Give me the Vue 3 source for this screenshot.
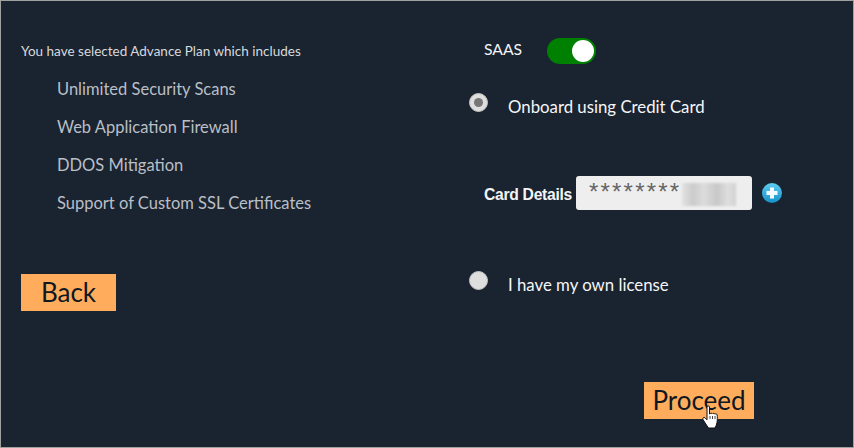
<script setup>
const features = [
  'Unlimited Security Scans',
  'Web Application Firewall',
  'DDOS Mitigation',
  'Support of Custom SSL Certificates'
]
</script>

<template>
  <div class="page">
    <section class="left">
      <p class="intro">You have selected Advance Plan which includes</p>
      <ul class="features">
        <li v-for="f in features" :key="f">{{ f }}</li>
      </ul>
      <button class="btn back">Back</button>
    </section>
    <section class="right">
      <div class="saas">
        <span class="saas-label">SAAS</span>
        <span class="toggle"><span class="knob"></span></span>
      </div>
      <div class="option first">
        <span class="radio checked"></span>
        <span class="opt-label">Onboard using Credit Card</span>
      </div>
      <div class="card">
        <span class="card-label">Card Details</span>
        <div class="input">
          <span class="stars">********</span>
          <span class="smudge"></span>
        </div>
        <svg class="plus" width="20" height="20" viewBox="0 0 20 20">
          <defs>
            <linearGradient id="pg" x1="0" y1="0" x2="0" y2="1">
              <stop offset="0" stop-color="#5fcdf0" />
              <stop offset="1" stop-color="#1590c8" />
            </linearGradient>
          </defs>
          <circle cx="10" cy="10" r="10" fill="url(#pg)" />
          <path d="M8 4.500h4V8h3.500v4H12v3.500H8V12H4.500V8H8z" fill="#f2fbff" />
        </svg>
      </div>
      <div class="option second">
        <span class="radio"></span>
        <span class="opt-label">I have my own license</span>
      </div>
      <div class="actions">
        <button class="btn proceed">Proceed</button>
      </div>
    </section>
    <svg class="cursor" width="18" height="25" viewBox="0 0 18 25">
      <path d="M5 2c0-1.400 2.500-1.400 2.500 0v7h.5c.3-1 2.200-1 2.500 0 .4-.9 2.100-.8 2.400.2.500-.8 2.100-.5 2.300.8.200 2 .2 5-.2 7.500-.3 2-1 3.500-2 5.500H6.500C5 20.500 2.500 17.500 1 14.500c-.7-1.500.8-2.700 2-1.700l2 2z" fill="#fff" stroke="#111" stroke-width="1" stroke-linejoin="round" />
      <path d="M8 11v3M10.500 11v3M13 11v3" stroke="#111" stroke-width=".8" fill="none" />
    </svg>
  </div>
</template>

<style>
html, body { margin: 0; background: #1a2330; }
</style>

<style scoped>
.page {
  position: relative;
  box-sizing: border-box;
  width: 854px;
  height: 448px;
  display: flex;
  background: #1a2330;
  border: 1px solid #a0a0a0;
  font-family: Lato, "Open Sans", sans-serif;
  overflow: hidden;
}
.left {
  width: 468px;
  flex: none;
  padding: 43px 0 0 20px;
  box-sizing: border-box;
}
.intro {
  margin: 0;
  font-size: 13.500px;
  line-height: 15px;
  color: #d6dade;
  white-space: nowrap;
}
.features {
  list-style: none;
  margin: 11px 0 0;
  padding: 0 0 0 36px;
}
.features li {
  height: 38px;
  line-height: 38px;
  font-size: 16.500px;
  color: #b9bfc6;
  white-space: nowrap;
}
.btn {
  display: block;
  border: 0;
  padding: 0 0 1px;
  box-sizing: border-box;
  height: 37px;
  background: #ffad5c;
  color: #0e1822;
  font-family: inherit;
  font-size: 26px;
  font-weight: 400;
}
.back { width: 95px; margin-top: 52px; }
.right { flex: 1; min-width: 0; }
.saas {
  display: flex;
  align-items: center;
  height: 26px;
  margin: 37px 0 0 15px;
}
.saas-label {
  width: 63px;
  margin-top: -4px;
  font-size: 15.700px;
  color: #f2f4f6;
}
.toggle {
  width: 49px;
  height: 26px;
  border-radius: 13px;
  background: #008000;
  display: flex;
  align-items: center;
  justify-content: flex-end;
  padding-right: 2px;
  box-sizing: border-box;
}
.knob {
  width: 22px;
  height: 22px;
  border-radius: 50%;
  background: #fff;
}
.option { display: flex; }
.first { margin-top: 29px; }
.second { margin-top: 61px; }
.radio {
  width: 19px;
  height: 19px;
  border-radius: 50%;
  background: #dedede;
  border: 1px solid #c4c4c4;
  box-sizing: border-box;
  display: flex;
  align-items: center;
  justify-content: center;
  flex: none;
}
.radio.checked::after {
  content: "";
  width: 9px;
  height: 9px;
  border-radius: 50%;
  background: #777;
}
.opt-label {
  margin: 5px 0 0 20px;
  font-size: 16.800px;
  line-height: 18px;
  color: #f5f6f7;
  white-space: nowrap;
}
.card {
  display: flex;
  align-items: center;
  margin: 60px 0 0 15px;
}
.card-label {
  width: 92px;
  font-size: 15.700px;
  font-weight: 700;
  color: #f2f4f6;
  font-family: "Liberation Sans", sans-serif;
  letter-spacing: -0.3px;
  margin-top: 4px;
  white-space: nowrap;
}
.input {
  position: relative;
  width: 176px;
  height: 34px;
  box-sizing: border-box;
  background: #eeeeee;
  border-radius: 3px;
  padding: 2px 0 0 13px;
  flex: none;
  overflow: hidden;
}
.stars {
  display: block;
  font-family: "Liberation Sans", sans-serif;
  font-size: 24px;
  line-height: 28px;
  letter-spacing: 2.200px;
  color: #666;
}
.smudge {
  position: absolute;
  left: 106px;
  top: 7px;
  width: 54px;
  height: 23px;
  background: linear-gradient(90deg, #e2e2e2, #cbcbcb 20%, #dcdcdc 40%, #c8c8c8 65%, #dedede 85%, #d2d2d2);
  filter: blur(1px);
}
.plus { margin-left: 10px; flex: none; }
.actions { display: flex; margin: 88px 0 0 175px; }
.proceed { width: 110px; }
.cursor { position: absolute; left: 701px; top: 404px; }
</style>
